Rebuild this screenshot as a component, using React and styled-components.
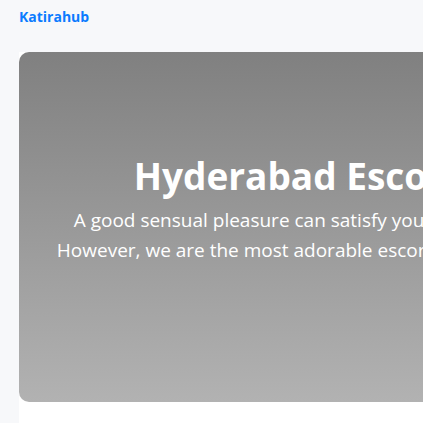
import React from 'react'
import styled, { createGlobalStyle } from 'styled-components'

const GlobalStyle = createGlobalStyle`
  html, body {
    margin: 0;
    padding: 0;
    background: #f7f8fa;
    overflow: hidden;
  }
  body {
    font-family: "Open Sans", "Noto Sans", sans-serif;
  }
`

const Page = styled.div`
  width: 423px;
  height: 423px;
  display: flex;
  flex-direction: column;
`

const Header = styled.header`
  padding: 5px 19px 0;
  height: 52px;
  box-sizing: border-box;
`

const Brand = styled.a`
  color: #0b7bff;
  font-weight: 700;
  font-size: 14px;
  text-decoration: none;
  line-height: 18px;
`

const Main = styled.main`
  flex: 1;
  margin-left: 19px;
  background: #ffffff;
  display: flex;
  flex-direction: column;
`

const Hero = styled.section`
  width: 716px;
  height: 350px;
  flex-shrink: 0;
  border-radius: 10px;
  background: linear-gradient(180deg, #808080 0%, #b2b2b2 100%);
  color: #ffffff;
  text-align: center;
  padding-top: 101px;
  box-sizing: border-box;
`

const Title = styled.h1`
  margin: 0 0 6px;
  font-size: 37px;
  font-weight: 700;
  line-height: 46px;
  white-space: nowrap;
`

const Line = styled.p`
  margin: 0;
  font-size: 19px;
  line-height: 30px;
  white-space: nowrap;
`

export default function App() {
  return (
    <Page>
      <GlobalStyle />
      <Header>
        <Brand href="#">Katirahub</Brand>
      </Header>
      <Main>
        <Hero>
          <Title>Hyderabad Escorts Service</Title>
          <Line>A good sensual pleasure can satisfy your soul and mind completely...</Line>
          <Line>However, we are the most adorable escort service in the Hyderabad city.</Line>
        </Hero>
      </Main>
    </Page>
  )
}
